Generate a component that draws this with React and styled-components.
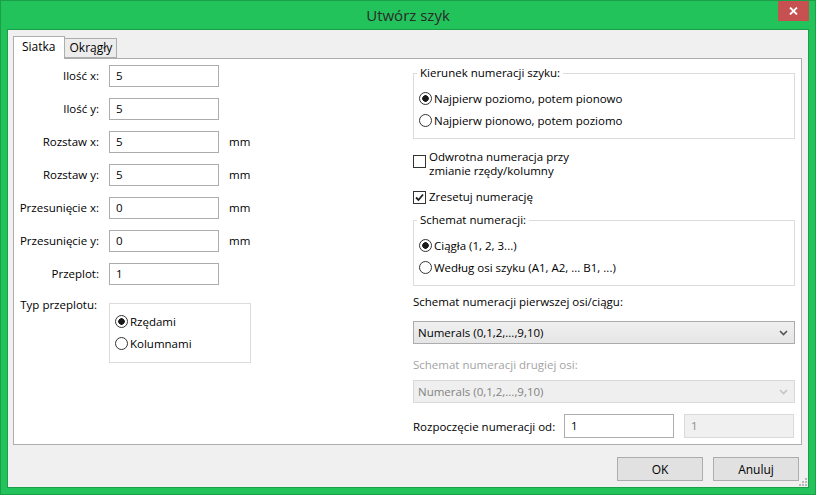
import styled, { createGlobalStyle } from "styled-components";

const GlobalStyle = createGlobalStyle`
    html, body {
        margin: 0;
        padding: 0;
        background: #22c35a;
    }
    * {
        box-sizing: border-box;
    }
`;

const FONT = `"Open Sans", "Noto Sans", sans-serif`;

function Radio({ checked, children }) {
    return (
        <StOption>
            <StRadio $checked={checked} />
            <span>{children}</span>
        </StOption>
    );
}

function CheckMark() {
    return (
        <svg width="11" height="11" viewBox="0 0 11 11">
            <path d="M2 5.5 L4.5 8 L9 2.5" fill="none" stroke="#222" strokeWidth="1.8" />
        </svg>
    );
}

function Chevron() {
    return (
        <svg width="9" height="6" viewBox="0 0 9 6">
            <path d="M1 1 L4.5 4.5 L8 1" fill="none" stroke="currentColor" strokeWidth="1.6" />
        </svg>
    );
}

function App() {
    const fields = [
        { label: "Ilość x:", value: "5" },
        { label: "Ilość y:", value: "5" },
        { label: "Rozstaw x:", value: "5", unit: "mm" },
        { label: "Rozstaw y:", value: "5", unit: "mm" },
        { label: "Przesunięcie x:", value: "0", unit: "mm" },
        { label: "Przesunięcie y:", value: "0", unit: "mm" },
        { label: "Przeplot:", value: "1" },
    ];

    return (
        <>
            <GlobalStyle />
            <StWindow>
                <StTitleBar>
                    <span />
                    <StTitle>Utwórz szyk</StTitle>
                    <StClose>
                        <svg width="9" height="8" viewBox="0 0 9 8">
                            <path d="M1 0.5 L8 7.5 M8 0.5 L1 7.5" stroke="#fff" strokeWidth="1.8" />
                        </svg>
                    </StClose>
                </StTitleBar>
                <StClient>
                    <StTabs>
                        <StTab $active>Siatka</StTab>
                        <StTab>Okrągły</StTab>
                    </StTabs>
                    <StPanel>
                        <StLeft>
                            {fields.map((f) => (
                                <StFieldRow key={f.label}>
                                    <StLabel>{f.label}</StLabel>
                                    <StInput>{f.value}</StInput>
                                    <StUnit>{f.unit}</StUnit>
                                </StFieldRow>
                            ))}
                            <StFieldRow $top>
                                <StLabel $top>Typ przeplotu:</StLabel>
                                <StPlainBox>
                                    <Radio checked>Rzędami</Radio>
                                    <Radio>Kolumnami</Radio>
                                </StPlainBox>
                            </StFieldRow>
                        </StLeft>
                        <StRight>
                            <StGroup>
                                <legend>Kierunek numeracji szyku:</legend>
                                <Radio checked>Najpierw poziomo, potem pionowo</Radio>
                                <Radio>Najpierw pionowo, potem poziomo</Radio>
                            </StGroup>
                            <StCheckRow $gap={11}>
                                <StCheckBox />
                                <span>
                                    Odwrotna numeracja przy
                                    <br />
                                    zmianie rzędy/kolumny
                                </span>
                            </StCheckRow>
                            <StCheckRow $gap={12}>
                                <StCheckBox>
                                    <CheckMark />
                                </StCheckBox>
                                <span>Zresetuj numerację</span>
                            </StCheckRow>
                            <StGroup $gap={8}>
                                <legend>Schemat numeracji:</legend>
                                <Radio checked>Ciągła (1, 2, 3...)</Radio>
                                <Radio>Według osi szyku (A1, A2, ... B1, ...)</Radio>
                            </StGroup>
                            <StText $gap={8}>Schemat numeracji pierwszej osi/ciągu:</StText>
                            <StSelect $gap={11}>
                                <span>Numerals (0,1,2,...,9,10)</span>
                                <Chevron />
                            </StSelect>
                            <StText $gap={13} $disabled>
                                Schemat numeracji drugiej osi:
                            </StText>
                            <StSelect $gap={7} $disabled>
                                <span>Numerals (0,1,2,...,9,10)</span>
                                <Chevron />
                            </StSelect>
                            <StStartRow>
                                <span>Rozpoczęcie numeracji od:</span>
                                <StInput $tall>1</StInput>
                                <StInput $tall $disabled>1</StInput>
                            </StStartRow>
                        </StRight>
                    </StPanel>
                    <StFooter>
                        <StButton>OK</StButton>
                        <StButton>Anuluj</StButton>
                    </StFooter>
                    <StGrip>
                        <svg width="10" height="10" viewBox="0 0 10 10" fill="#b9b9b9">
                            <rect x="7" y="1" width="2" height="2" />
                            <rect x="4" y="4" width="2" height="2" />
                            <rect x="7" y="4" width="2" height="2" />
                            <rect x="1" y="7" width="2" height="2" />
                            <rect x="4" y="7" width="2" height="2" />
                            <rect x="7" y="7" width="2" height="2" />
                        </svg>
                    </StGrip>
                </StClient>
            </StWindow>
        </>
    );
}

export default App;

const StWindow = styled.div`
    width: 816px;
    height: 495px;
    display: flex;
    flex-direction: column;
    background: #22c35a;
    border: 1px solid #1b9f48;
    padding: 0 6px 6px;
    font-family: ${FONT};
    font-size: 11.5px;
    color: #000;
`;
const StTitleBar = styled.div`
    height: 28px;
    display: grid;
    grid-template-columns: 31px 1fr 31px;
    align-items: start;
`;
const StTitle = styled.div`
    text-align: center;
    font-size: 15px;
    line-height: 28px;
    color: #2b2b2b;
`;
const StClose = styled.div`
    height: 20px;
    background: #c75050;
    display: flex;
    align-items: center;
    justify-content: center;
`;
const StClient = styled.div`
    position: relative;
    flex: 1;
    display: flex;
    flex-direction: column;
    background: #f0f0f0;
    border: 1px solid #1b9f48;
    padding: 6px 6px 6px 5px;
`;
const StTabs = styled.div`
    display: flex;
    align-items: flex-end;
    height: 22px;
`;
const StTab = styled.div`
    position: relative;
    z-index: 1;
    height: ${(p) => (p.$active ? "23px" : "20px")};
    margin-bottom: ${(p) => (p.$active ? "-1px" : "0")};
    padding: ${(p) => (p.$active ? "2px 8px 0" : "1px 4px 0 5px")};
    background: ${(p) => (p.$active ? "#fff" : "#ececec")};
    border: 1px solid #adadad;
    border-bottom: ${(p) => (p.$active ? "none" : "1px solid #adadad")};
    border-left: ${(p) => (p.$active ? "1px solid #adadad" : "none")};
    line-height: 16px;
    font-size: 12px;
`;
const StPanel = styled.div`
    height: 387px;
    background: #fff;
    border: 1px solid #adadad;
    padding: 6px 6px 0 0;
    display: grid;
    grid-template-columns: 399px minmax(0, 1fr);
    align-items: start;
`;
const StLeft = styled.div`
    display: flex;
    flex-direction: column;
    gap: 11px;
`;
const StFieldRow = styled.div`
    display: grid;
    grid-template-columns: 85px 110px auto;
    column-gap: 10px;
    align-items: ${(p) => (p.$top ? "start" : "center")};
    margin-top: ${(p) => (p.$top ? "1px" : "0")};
`;
const StLabel = styled.span`
    text-align: right;
    white-space: nowrap;
    line-height: 16px;
    margin-right: ${(p) => (p.$top ? "2px" : "0")};
`;
const StUnit = styled.span`
    line-height: 16px;
`;
const StInput = styled.div`
    height: ${(p) => (p.$tall ? "24px" : "22px")};
    border: 1px solid ${(p) => (p.$disabled ? "#d9d9d9" : "#acacac")};
    background: ${(p) => (p.$disabled ? "#f0f0f0" : "#fff")};
    color: ${(p) => (p.$disabled ? "#8d8d8d" : "#000")};
    padding: 0 6px;
    line-height: ${(p) => (p.$tall ? "22px" : "20px")};
`;
const StPlainBox = styled.div`
    grid-column: 2 / 4;
    width: 142px;
    height: 60px;
    margin-top: 6px;
    border: 1px solid #dcdcdc;
    padding: 6px 5px 0;
    display: flex;
    flex-direction: column;
`;
const StOption = styled.label`
    display: flex;
    align-items: center;
    gap: 2px;
    height: 22px;
    white-space: nowrap;
`;
const StRadio = styled.span`
    width: 13px;
    height: 13px;
    flex: none;
    border-radius: 50%;
    border: 1px solid #333;
    background: ${(p) =>
        p.$checked
            ? "radial-gradient(circle, #1a1a1a 0 3px, #fff 3.5px)"
            : "#fff"};
`;
const StRight = styled.div`
    min-width: 0;
    display: flex;
    flex-direction: column;
`;
const StGroup = styled.fieldset`
    margin: ${(p) => p.$gap || 0}px 0 0;
    min-width: 0;
    border: 1px solid #dcdcdc;
    padding: 6px 5px 7px;

    legend {
        padding: 0 3px 0 3px;
        margin-left: -2px;
        line-height: 16px;
    }
`;
const StCheckRow = styled.div`
    display: flex;
    align-items: flex-start;
    gap: 3px;
    margin-top: ${(p) => p.$gap}px;
    line-height: 14px;
`;
const StCheckBox = styled.span`
    width: 13px;
    height: 13px;
    flex: none;
    margin-top: ${(p) => (p.children ? "1px" : "5px")};
    border: 1px solid #333;
    background: #fff;
    display: flex;
    align-items: center;
    justify-content: center;
`;
const StText = styled.div`
    margin-top: ${(p) => p.$gap}px;
    line-height: 16px;
    color: ${(p) => (p.$disabled ? "#a3a3a3" : "#000")};
`;
const StSelect = styled.div`
    margin-top: ${(p) => p.$gap}px;
    height: 23px;
    display: flex;
    align-items: center;
    justify-content: space-between;
    padding: 0 6px 0 4px;
    border: 1px solid ${(p) => (p.$disabled ? "#d9d9d9" : "#acacac")};
    background: ${(p) =>
        p.$disabled ? "#efefef" : "linear-gradient(#f0f0f0, #e5e5e5)"};
    color: ${(p) => (p.$disabled ? "#838383" : "#000")};

    svg {
        color: ${(p) => (p.$disabled ? "#c4c4c4" : "#555")};
    }
`;
const StStartRow = styled.div`
    margin-top: 11px;
    display: grid;
    grid-template-columns: 141px 110px 110px;
    column-gap: 10px;
    align-items: center;
    white-space: nowrap;
`;
const StFooter = styled.div`
    margin-top: 12px;
    padding-right: 3px;
    display: flex;
    justify-content: flex-end;
    gap: 10px;
`;
const StButton = styled.button`
    width: 86px;
    height: 24px;
    font-family: ${FONT};
    font-size: 12px;
    color: #000;
    background: #e1e1e1;
    border: 1px solid #adadad;
    border-radius: 0;
    padding: 0;
`;
const StGrip = styled.div`
    position: absolute;
    right: 0;
    bottom: 0;
    width: 10px;
    height: 10px;
    display: flex;
`;
